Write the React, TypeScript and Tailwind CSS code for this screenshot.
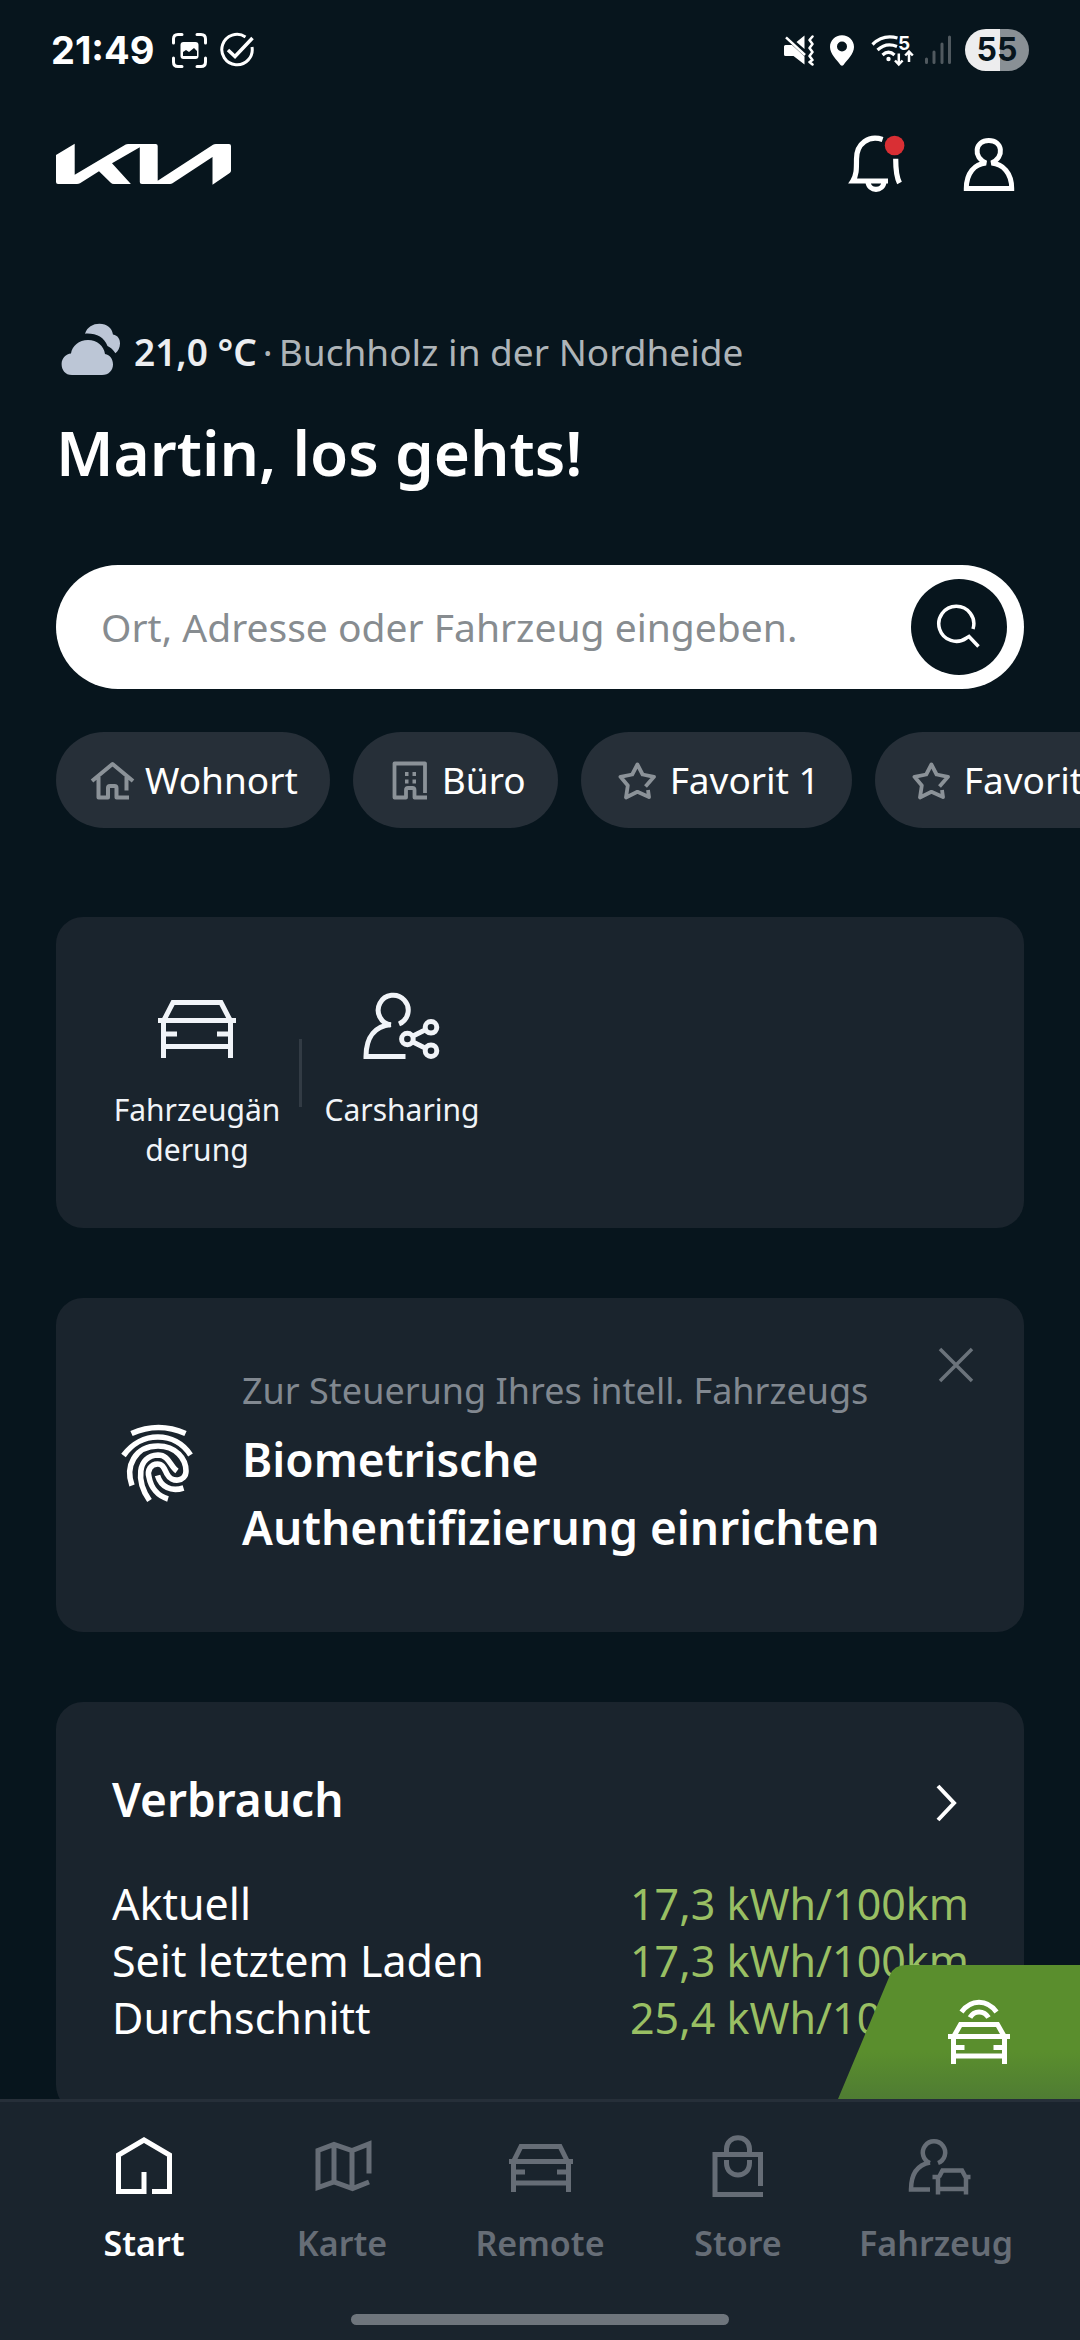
import type { ReactNode } from "react"

interface IconProps {
  children: ReactNode
  viewBox: string
  className: string
  strokeWidth?: number
}

function Icon({ children, viewBox, className, strokeWidth = 5 }: IconProps) {
  return (
    <svg
      viewBox={viewBox}
      className={`shrink-0 ${className}`}
      fill="none"
      stroke="currentColor"
      strokeWidth={strokeWidth}
      aria-hidden="true"
    >
      {children}
    </svg>
  )
}

function StatusBar() {
  return (
    <div className="flex h-[100px] items-center px-[51px] font-['Inter',sans-serif] text-white">
      <span className="text-[38px] leading-[48px] font-bold">21:49</span>
      <Icon viewBox="0 0 37 37" className="ml-[17px] h-[37px] w-[37px]" strokeWidth={3}>
        <path
          d="M11 2.5H7Q2.5 2.5 2.5 7V11M26 2.5h4Q34.5 2.5 34.5 7V11M11 34.5H7Q2.5 34.5 2.5 30V26M26 34.5h4Q34.5 34.5 34.5 30V26"
          strokeLinecap="round"
        />
        <rect x="9.5" y="10" width="18" height="17" rx="3" fill="currentColor" stroke="none" />
        <path d="M12 24v-4l3-2 3 2 5-4 3 3v5z" fill="#07151d" stroke="none" />
      </Icon>
      <Icon viewBox="0 0 36 36" className="ml-[11px] h-[36px] w-[36px]" strokeWidth={3}>
        <path d="M26.5 5A15.2 15.2 0 1 0 33 15" />
        <path d="M9 18l7 6.5L33.5 6" strokeWidth="3.5" />
      </Icon>

      <Icon viewBox="0 0 31 31" className="ml-auto h-[31px] w-[31px]" strokeWidth={2.5}>
        <path
          d="M1.5 10H8L20.5 21.5V29.5L9.5 21H1.5Q0 21 0 19.5V11.5Q0 10 1.5 10ZM12.5 7L20.5 .5V14Z"
          fill="currentColor"
          stroke="none"
        />
        <path d="M2 2.3L21 20" />
        <path d="M28.5 1.5L25.5 5l3 4-3 4 3 4-3 4 3 4-3 2 3 2.5" strokeLinejoin="round" strokeLinecap="round" />
      </Icon>
      <Icon viewBox="0 0 24 31" className="ml-[15px] h-[31px] w-[24px]">
        <path
          fillRule="evenodd"
          d="M12 .3C5 .3 0 5.5 0 12 0 19 7 25 10.5 30Q12 31.5 13.5 30C17 25 24 19 24 12 24 5.5 19 .3 12 .3ZM12 6.5a5 5 0 1 1 0 10 5 5 0 1 1 0-10Z"
          fill="currentColor"
          stroke="none"
        />
      </Icon>
      <Icon viewBox="0 0 46 34" className="ml-[16px] h-[34px] w-[46px]" strokeWidth={3.2}>
        <path d="M2.5 11.5Q13 1 27.5 5M7.5 17Q16 9 27 13.5M12.5 22Q18.5 16.5 24.5 22" />
        <circle cx="18.5" cy="26" r="2.2" fill="currentColor" stroke="none" />
        <path d="M28.8 20.5v10M25 27.5l3.8 4 3.8-4M39 29V18.5M35.2 22.5l3.8-4 3.8 4" strokeWidth="2.5" />
        <text x="28" y="16.5" fontSize="19" fontWeight="700" fill="currentColor" stroke="none">5</text>
      </Icon>
      <Icon viewBox="0 0 30 30" className="ml-[8px] h-[30px] w-[30px] text-[#50595f]" strokeWidth={3}>
        <path d="M2.5 24v3.5M10 17v10.5M18 9v18.5M25.5 2v25.5" strokeLinecap="round" />
      </Icon>
      <span className="ml-[11px] flex h-[42px] w-[64px] items-center justify-center rounded-full bg-linear-to-r from-[#ededee] from-55% to-[#899095] to-55% text-[32px] leading-[40px] font-bold text-[#07151d]">
        55
      </span>
    </div>
  )
}

function KiaLogo() {
  return (
    <svg viewBox="0 0 175 42" className="h-[42px] w-[175px]" fill="currentColor" role="img" aria-label="Kia">
      <path d="M0 12L18.7 .7V31.7L69.7 1.5Q70.5 1 72 1H99.7Q101.7 1 101.7 3V37.7L157 1.7Q158 1 160 1H173Q175 1 175 3V27.7Q175 29.2 173.7 30L156.5 41.7V14L116.5 40.3Q115.5 41 114 41H85.9Q83.8 41 83.8 39V4.3L56 20.3L74.9 41H58Q56 41 54.5 39.5L43 28.3L24 40.3Q22.7 41 21 41H2Q0 41 0 39Z" />
    </svg>
  )
}

function Header() {
  return (
    <header className="flex h-[128px] items-center pr-[60px] pl-14">
      <KiaLogo />
      <button type="button" aria-label="Mitteilungen" className="ml-auto">
        <Icon viewBox="0 0 60 64" className="h-[64px] w-[60px]" strokeWidth={5.2}>
          <path d="M35.6 7.5C22 3 9.5 11 9.5 27C9.5 38 9.5 43 5.8 49H41M48.7 26.7C48.7 39 49.5 45 52.5 51M21 49.5C21.5 60 36.5 60 37 49.5" />
          <circle cx="47.6" cy="13.5" r="9.8" fill="#d92f34" stroke="none" />
        </Icon>
      </button>
      <button type="button" aria-label="Profil" className="ml-[53px]">
        <Icon viewBox="0 0 60 58" className="h-[58px] w-[60px]">
          <path d="M26 28C12.5 22 15 5.5 28.8 5.5C42.5 5.5 45 22 31.5 28C43 29 51.7 38 51.7 53.5H6.3C6.3 38 14.5 29 26 28Z" />
        </Icon>
      </button>
    </header>
  )
}

function Greeting() {
  return (
    <div className="mt-[94px] px-14">
      <p className="flex h-[60px] items-center text-[37px] leading-[60px] text-[#aeb4b8]">
        <svg viewBox="0 0 64 60" className="h-[60px] w-[64px] shrink-0" fill="#bcc6d6" aria-hidden="true">
          <path d="M16 53C9 53 5.6 48 5.6 42C5.6 36 10 32 15 31.5C16 24 23 18 32 18C41 18 48 24 49 32C54 33 57 37 57 42.5C57 48 53 53 46 53Z" />
          <path d="M29 11.7C31 5 37 1.7 43.4 1.7C51 1.7 56 6 57 12.5C62 13.5 64 17 64 21.5C64 26 62 29 59.4 31.3Q56 26 51.5 24C48 15 40 11 29 11.7Z" />
        </svg>
        <span className="ml-[14px] font-semibold text-[#eceef1]">21,0 °C</span>
        <span className="mx-[6px]">·</span>
        <span>Buchholz in der Nordheide</span>
      </p>
      <h1 className="mt-[30px] text-[62px] leading-[80px] font-semibold">Martin, los gehts!</h1>
    </div>
  )
}

function SearchBar() {
  return (
    <form className="mx-14 mt-[73px] flex h-[124px] items-center rounded-full bg-white pr-[17px] pl-[45px]">
      <input
        type="text"
        aria-label="Ort, Adresse oder Fahrzeug"
        placeholder="Ort, Adresse oder Fahrzeug eingeben."
        className="h-[60px] min-w-0 flex-1 bg-transparent text-[39px] leading-[60px] text-[#07151d] outline-none placeholder:text-[#878c90]"
      />
      <button type="button" aria-label="Suchen" className="flex size-24 items-center justify-center rounded-full bg-[#07151d]">
        <Icon viewBox="0 0 48 48" className="size-12" strokeWidth={3.5}>
          <path d="M38 26A17.5 17.5 0 1 0 31.5 35L34 33.5L43.5 43.5" />
        </Icon>
      </button>
    </form>
  )
}

function StarIcon() {
  return (
    <Icon viewBox="0 0 48 48" className="size-12" strokeWidth={3.8}>
      <path
        d="M35 34L36 41L24.4 35.8L13 41.5L14.8 29.5L7.5 20.8L19.2 18.5L24.4 8.5L29.6 18.5L41 20.8L32.5 30.5"
        strokeLinejoin="round"
      />
    </Icon>
  )
}

const shortcuts = [
  {
    label: "Wohnort",
    icon: (
      <Icon viewBox="0 0 48 48" className="size-12" strokeWidth={4}>
        <path
          d="M4 25L24.5 8L45 25M10.5 21V41.5H20V32Q20 30 22 30H26.5Q28.5 30 28.5 32V41.5H41M38.5 21V34.5"
          strokeLinejoin="round"
        />
      </Icon>
    ),
  },
  {
    label: "Büro",
    icon: (
      <Icon viewBox="0 0 48 48" className="size-12" strokeWidth={3.8}>
        <path
          d="M42 41.5H29.5V34Q29.5 32 27.5 32H23Q21 32 21 34V41.5H9.5V7.5H40V37"
          strokeLinejoin="round"
        />
        <path d="M20 18h3.5M27.5 18H31M20 25.5h3.5M27.5 25.5H31" />
      </Icon>
    ),
  },
  { label: "Favorit 1", icon: <StarIcon /> },
  { label: "Favorit 2", icon: <StarIcon /> },
]

function Shortcuts() {
  return (
    <div className="mt-[43px] flex gap-[23px] overflow-hidden pl-14">
      {shortcuts.map((item) => (
        <button
          key={item.label}
          type="button"
          className="flex h-24 shrink-0 items-center gap-[9px] rounded-full bg-[#262f38] pr-8 pl-8 text-[37px] leading-[48px] text-[#8b9298]"
        >
          {item.icon}
          <span className="text-white">{item.label}</span>
        </button>
      ))}
    </div>
  )
}

function QuickActions() {
  return (
    <section className="mx-14 mt-[89px] flex rounded-[27px] bg-[#1a242d] pt-[73px] pb-[58px] pl-[39px] text-[30px] leading-10 text-[#f1f4f8]">
      <button type="button" className="flex w-[204px] flex-col items-center">
        <Icon viewBox="0 0 78 62" className="mt-[10px] h-[62px] w-[78px]">
          <path d="M6 20L15 2.5H63L72 20M0 20.5H78M5.5 20V58M72.5 20V58M5.5 34H19M59 34H72.5M5.5 46.5H72.5" />
        </Icon>
        <span className="mt-7 w-[174px] break-all">Fahrzeugänderung</span>
      </button>
      <div className="mt-[49px] h-[68px] w-[3px] bg-[#323b44]" />
      <button type="button" className="flex w-[200px] flex-col items-center">
        <Icon viewBox="0 0 84 72" className="h-[72px] w-[84px]">
          <path d="M31 35A15 15 0 1 1 39 34M31 34.5C16 36 6 46 6 66.5H45.5M52 46.5L66 39.5M52 51.5L66 58.5" />
          <circle cx="47.4" cy="49" r="5.8" />
          <circle cx="71" cy="37.3" r="5.8" />
          <circle cx="71" cy="60.7" r="5.8" />
        </Icon>
        <span className="mt-7">Carsharing</span>
      </button>
    </section>
  )
}

function BiometricCard() {
  return (
    <section className="mx-14 mt-[70px] flex rounded-[27px] bg-[#1a242d] pr-[41px] pl-[62px]">
      <Icon viewBox="0 2 80 86" className="h-[86px] w-[80px] self-center" strokeWidth={5.6}>
        <path d="M13.5 13.5Q40.5 1.5 67.5 13.5M5.5 35.5C23 11 57 11 72.5 35" />
        <path d="M14 65.5C7 46 17 26 40 26C58 26 68 39 68 51C68 62 53.5 63 49 54C46 48 45 44 39.5 44C33 44 29 50 31 57C33 68 40 76 50 79" />
        <path d="M31.5 80.5C18 61 19 36 40 35C51 35 52 46 59 51M39.5 55.5C43 67 53 72 65.5 68" />
      </Icon>
      <div className="ml-11 flex-1 pt-[69px] pb-[71px]">
        <p className="text-[36px] leading-[48px] text-[#818890]">Zur Steuerung Ihres intell. Fahrzeugs</p>
        <h2 className="mt-[10px] text-[46px] leading-[68px] font-semibold">
          Biometrische
          <br />
          Authentifizierung einrichten
        </h2>
      </div>
      <button type="button" aria-label="Schließen" className="mt-10 self-start text-[#6b737b]">
        <Icon viewBox="0 0 54 54" className="size-[54px]" strokeWidth={3.5}>
          <path d="M11 11L43 43M43 11L11 43" />
        </Icon>
      </button>
    </section>
  )
}

const consumption = [
  { label: "Aktuell", value: "17,3 kWh/100km" },
  { label: "Seit letztem Laden", value: "17,3 kWh/100km" },
  { label: "Durchschnitt", value: "25,4 kWh/100km" },
]

function ConsumptionCard() {
  return (
    <section className="mx-14 mt-[70px] rounded-[27px] bg-[#1a242d] pt-[63px] pr-[55px] pb-[66px] pl-14">
      <div className="flex items-center justify-between">
        <h2 className="text-[46px] leading-[68px] font-semibold">Verbrauch</h2>
        <button type="button" aria-label="Verbrauch öffnen">
          <Icon viewBox="0 0 48 56" className="h-14 w-12" strokeWidth={4}>
            <path d="M17 15L33 32L17 49" />
          </Icon>
        </button>
      </div>
      <table className="mt-[42px] w-full text-[43px] leading-[57px]">
        <tbody>
          {consumption.map((row) => (
            <tr key={row.label}>
              <th scope="row" className="p-0 text-left font-normal">{row.label}</th>
              <td className="p-0 text-right text-[#99bf63]">{row.value}</td>
            </tr>
          ))}
        </tbody>
      </table>
    </section>
  )
}

/* Slanted tab that floats over the lower right corner */
function RemoteTab() {
  return (
    <button type="button" aria-label="Fernbedienung" className="absolute right-0 bottom-0 h-[134px] w-[242px]">
      <svg viewBox="0 0 242 134" className="h-[134px] w-[242px]" fill="none" aria-hidden="true">
        <defs>
          <linearGradient id="tab" x1="0" y1="0" x2="0" y2="1">
            <stop offset="0.65" stopColor="#5a8e2d" />
            <stop offset="1" stopColor="#4f7c33" />
          </linearGradient>
        </defs>
        <path d="M0 134L52 10Q56 0 68 0H242V134Z" fill="url(#tab)" />
        <g transform="translate(108 32)" stroke="#fff" strokeWidth="5">
          <path d="M15.5 15C25 2 41 2 50.5 15M24 20.5C28 13 38 13 42.5 20.5" />
          <path d="M8 39L14.5 27.5H51.5L58 39M2 39.5H64M7.5 39V67M58.5 39V67M7.5 50.5H18.5M47.5 50.5H58.5M7.5 59H58.5" />
        </g>
      </svg>
    </button>
  )
}

const navItems = [
  {
    label: "Start",
    active: true,
    icon: <path d="M30 38V57.5H4.5V21L30 6L55.5 21V57.5H38" />,
  },
  {
    label: "Karte",
    icon: <path d="M57 39.5V10L40 16.5L22 10.5L6 16.5V53.5L22 48L40.5 54.5L57 48M22 10.5V48M40 16.5V54" />,
  },
  {
    label: "Remote",
    icon: <path d="M4 26.5L11 12.5H50L57 26.5M-1 27.5H63M3.5 27V58M58.5 27V58M3.5 38H15M47 38H58.5M3.5 49H58.5" />,
  },
  {
    label: "Store",
    icon: <path d="M52.5 52V20.5H7V60.5H55M18.5 20.5V15C18.5 0 41.5 0 41.5 15V20.5M18.5 26V29C18.5 45 41.5 45 41.5 29V26" />,
  },
  {
    label: "Fahrzeug",
    icon: (
      <path
        d="M24 29A11.2 11.2 0 1 1 32 29M24 28.5C11 31 5 40 5 55.5H24M33 43L36.5 36.5H56L59.5 43M26.5 43H34M58.5 43H64.5M32 42V60.5M60 42V60.5M32 55H60"
        strokeWidth="4.5"
      />
    ),
  },
]

function BottomNav() {
  return (
    <footer className="border-t-[3px] border-[#262f39] bg-[#1a242d] pb-[15px]">
      <nav className="flex px-[45px] pt-8">
        {navItems.map((item) => (
          <a
            key={item.label}
            href="#"
            aria-current={item.active ? "page" : undefined}
            className={`flex flex-1 flex-col items-center ${item.active ? "text-white" : "text-[#666d76]"}`}
          >
            <Icon viewBox="0 0 60 64" className="h-16 w-[60px] overflow-visible">
              {item.icon}
            </Icon>
            <span className="mt-[23px] text-[34px] leading-[44px] font-semibold">{item.label}</span>
          </a>
        ))}
      </nav>
      <div className="mx-auto mt-[49px] h-[11px] w-[35%] rounded-full bg-[#6e757c]" />
    </footer>
  )
}

export default function App() {
  return (
    <div className="flex h-screen flex-col bg-[#07151d] font-['Noto_Sans',sans-serif] text-white">
      <main className="relative min-h-0 flex-1 overflow-hidden">
        <StatusBar />
        <Header />
        <Greeting />
        <SearchBar />
        <Shortcuts />
        <QuickActions />
        <BiometricCard />
        <ConsumptionCard />
        <RemoteTab />
      </main>
      <BottomNav />
    </div>
  )
}
